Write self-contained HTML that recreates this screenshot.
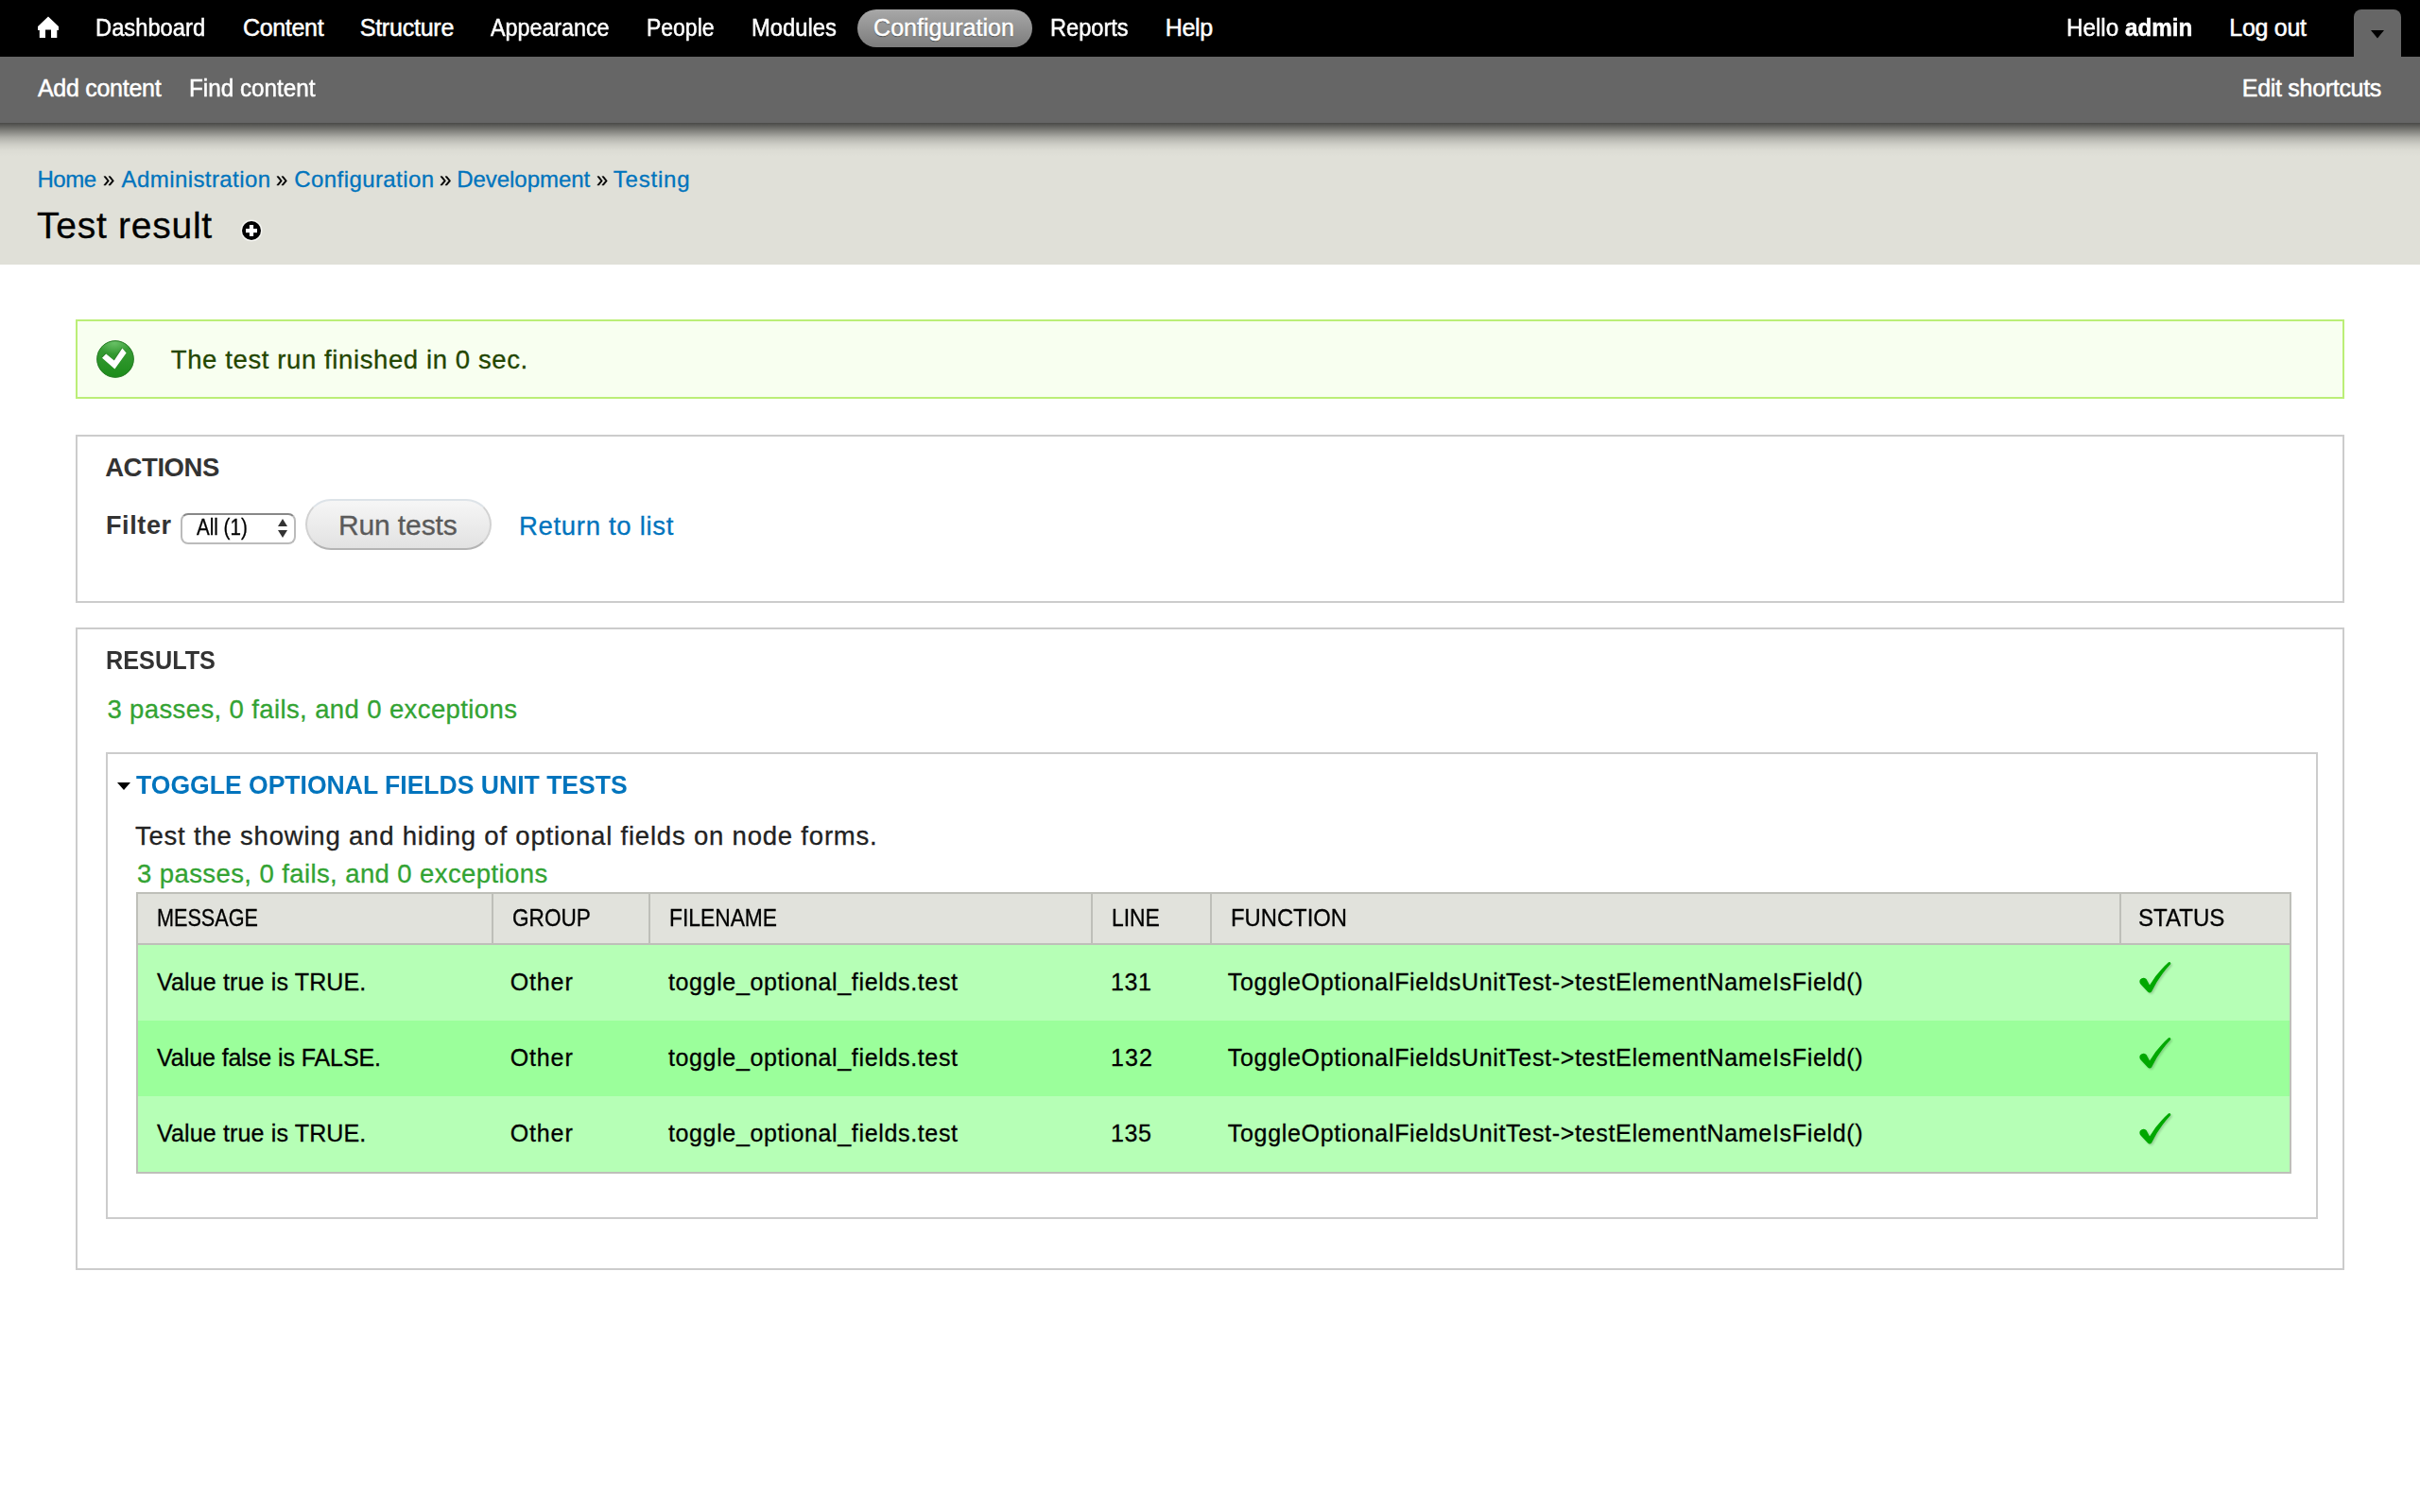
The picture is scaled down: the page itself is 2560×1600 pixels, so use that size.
<!DOCTYPE html>
<html><head><meta charset="utf-8"><title>Test result | Drupal</title>
<style>
html,body{margin:0;padding:0;}
body{width:2560px;height:1600px;position:relative;overflow:hidden;background:#fff;font-family:"Liberation Sans",sans-serif;color:#000;}
.a{position:absolute;}
.t{position:absolute;white-space:nowrap;line-height:1;}
#tb{left:0;top:0;width:2560px;height:60px;background:#000;}
#sc{left:0;top:60px;width:2560px;height:70px;background:#666;}
#hd{left:0;top:130px;width:2560px;height:150px;background:#e0e0d8;}
#shadow{left:0;top:130px;width:2560px;height:36px;background:linear-gradient(to bottom,rgba(0,0,0,.67) 0%,rgba(0,0,0,.38) 27.8%,rgba(0,0,0,.21) 44%,rgba(0,0,0,.085) 63%,rgba(0,0,0,.018) 80%,rgba(0,0,0,0) 100%);}
#pill{left:907px;top:10px;width:185px;height:40px;border-radius:20px;background:linear-gradient(#a8a8a8,#7c7c7c);}
#tab{left:2490px;top:10px;width:50px;height:50px;border-radius:8px 8px 0 0;background:#666;}
#msg{left:80px;top:338px;width:2396px;height:80px;border:2px solid #bbee77;background:#f8fff0;}
.fs{border:2px solid #ccc;}
#tbl{left:144px;top:944px;width:2276px;height:294px;border:2px solid #bebfb9;}
</style></head><body>
<div id="tb" class="a"></div>
<div id="sc" class="a"></div>
<div id="hd" class="a"></div>
<div id="shadow" class="a"></div>
<svg class="a" style="left:0;top:0" width="80" height="60" viewBox="0 0 80 60"><path fill="#fff" d="M51 17.5 L62 28 L62 32 L60.3 32 L60.3 40 L54 40 L54 31.5 L48 31.5 L48 40 L41.8 40 L41.8 32 L40 32 L40 28 Z"/></svg>
<div id="pill" class="a"></div>
<div id="tab" class="a"></div>
<svg class="a" style="left:2500px;top:25px" width="30" height="20" viewBox="0 0 30 20"><path d="M8 7 L22 7 L15 15.6 Z" fill="#000"/></svg>
<svg class="a" style="left:252px;top:230px" width="28" height="28" viewBox="0 0 28 28"><circle cx="14" cy="14" r="11.5" fill="#f4f4f0"/><circle cx="14" cy="14" r="10" fill="#000"/><rect x="8" y="12" width="12" height="4.2" fill="#fff"/><rect x="11.9" y="8" width="4.2" height="12" fill="#fff"/></svg>
<div id="msg" class="a"></div>
<svg class="a" style="left:98px;top:356px" width="48" height="48" viewBox="0 0 48 48"><defs><linearGradient id="gg" x1="0" y1="0" x2="0" y2="1"><stop offset="0" stop-color="#3fa03c"/><stop offset="1" stop-color="#1c8c1a"/></linearGradient><radialGradient id="hl" cx=".5" cy=".2" r=".5"><stop offset="0" stop-color="#6cc46a" stop-opacity=".9"/><stop offset="1" stop-color="#6cc46a" stop-opacity="0"/></radialGradient></defs><circle cx="24" cy="24" r="19.6" fill="url(#gg)"/><clipPath id="cc"><circle cx="24" cy="24" r="19.3"/></clipPath><ellipse cx="23" cy="14" rx="17" ry="12" fill="url(#hl)" clip-path="url(#cc)"/><circle cx="24" cy="24" r="19.3" fill="none" stroke="#2b7d29" stroke-width="1"/><path d="M10 22.8 L14.2 18.6 L22.8 25.5 L31.4 12.4 L35.6 17.6 L23.4 34.5 Z" fill="#2a6a28" opacity=".45" transform="translate(-0.6,-1)"/><path d="M10 22.8 L14.2 18.6 L22.8 25.5 L31.4 12.4 L35.6 17.6 L23.4 34.5 Z" fill="#fff"/></svg>
<div class="a fs" style="left:80px;top:460px;width:2396px;height:174px"></div>
<div class="a" style="left:191px;top:543px;width:118px;height:29px;border:2px solid #bbb;border-top-color:#888;border-radius:8px;background:#fff"></div>
<svg class="a" style="left:290px;top:546px" width="18" height="26" viewBox="0 0 18 26"><path d="M4 11 L9 3 L14 11 Z M4 15 L14 15 L9 23 Z" fill="#333"/></svg>
<div class="a" style="left:323px;top:528px;width:193px;height:50px;border:2px solid #d2d2d2;border-top-color:#dde3e8;border-bottom-color:#b4b4b4;border-radius:28px;background:linear-gradient(#f6f6f6,#e2e2e2)"></div>
<div class="a fs" style="left:80px;top:664px;width:2396px;height:676px"></div>
<div class="a fs" style="left:112px;top:796px;width:2336px;height:490px"></div>
<svg class="a" style="left:120px;top:824px" width="22" height="16" viewBox="0 0 22 16"><path d="M4 4 L18 4 L11 12 Z" fill="#000"/></svg>
<div id="tbl" class="a"></div>
<div class="a" style="left:146px;top:946px;width:2276px;height:52px;background:#e1e2dc;border-bottom:2px solid #bebfb9"></div>
<div class="a" style="left:520px;top:946px;width:2px;height:52px;background:#bebfb9"></div>
<div class="a" style="left:686px;top:946px;width:2px;height:52px;background:#bebfb9"></div>
<div class="a" style="left:1154px;top:946px;width:2px;height:52px;background:#bebfb9"></div>
<div class="a" style="left:1280px;top:946px;width:2px;height:52px;background:#bebfb9"></div>
<div class="a" style="left:2242px;top:946px;width:2px;height:52px;background:#bebfb9"></div>
<div class="a" style="left:146px;top:1000px;width:2276px;height:80px;background:#b6ffb6"></div>
<div class="a" style="left:146px;top:1080px;width:2276px;height:80px;background:#9bff9b"></div>
<div class="a" style="left:146px;top:1160px;width:2276px;height:80px;background:#b6ffb6"></div>
<svg class="a" style="left:2255px;top:1010px" width="50" height="50" viewBox="0 0 50 50"><path d="M9 26.5 Q12 23.5 15.5 26 L19 32.5 Q27 19 39 8.3 Q41.5 7.5 41.3 10 Q29 23 21 39.5 Q19 41.5 17 39.5 L9.5 31.5 Q7.5 29 9 26.5 Z" fill="#000" opacity=".18" transform="translate(1.5,1.5)" filter="url(#blr)"/><path d="M9 26.5 Q12 23.5 15.5 26 L19 32.5 Q27 19 39 8.3 Q41.5 7.5 41.3 10 Q29 23 21 39.5 Q19 41.5 17 39.5 L9.5 31.5 Q7.5 29 9 26.5 Z" fill="#00a800"/></svg>
<svg class="a" style="left:2255px;top:1090px" width="50" height="50" viewBox="0 0 50 50"><path d="M9 26.5 Q12 23.5 15.5 26 L19 32.5 Q27 19 39 8.3 Q41.5 7.5 41.3 10 Q29 23 21 39.5 Q19 41.5 17 39.5 L9.5 31.5 Q7.5 29 9 26.5 Z" fill="#000" opacity=".18" transform="translate(1.5,1.5)" filter="url(#blr)"/><path d="M9 26.5 Q12 23.5 15.5 26 L19 32.5 Q27 19 39 8.3 Q41.5 7.5 41.3 10 Q29 23 21 39.5 Q19 41.5 17 39.5 L9.5 31.5 Q7.5 29 9 26.5 Z" fill="#00a800"/></svg>
<svg class="a" style="left:2255px;top:1170px" width="50" height="50" viewBox="0 0 50 50"><path d="M9 26.5 Q12 23.5 15.5 26 L19 32.5 Q27 19 39 8.3 Q41.5 7.5 41.3 10 Q29 23 21 39.5 Q19 41.5 17 39.5 L9.5 31.5 Q7.5 29 9 26.5 Z" fill="#000" opacity=".18" transform="translate(1.5,1.5)" filter="url(#blr)"/><path d="M9 26.5 Q12 23.5 15.5 26 L19 32.5 Q27 19 39 8.3 Q41.5 7.5 41.3 10 Q29 23 21 39.5 Q19 41.5 17 39.5 L9.5 31.5 Q7.5 29 9 26.5 Z" fill="#00a800"/></svg>
<svg width="0" height="0" style="position:absolute"><defs><filter id="blr" x="-20%" y="-20%" width="140%" height="140%"><feGaussianBlur stdDeviation="1"/></filter></defs></svg>
<div class="t" style="left:101.4px;top:16.94px;font-size:25px;color:#fff;transform:scaleX(0.9496);transform-origin:0 0;-webkit-text-stroke:0.5px #fff;">Dashboard</div>
<div class="t" style="left:256.9px;top:16.94px;font-size:25px;color:#fff;letter-spacing:-0.3px;-webkit-text-stroke:0.5px #fff;">Content</div>
<div class="t" style="left:380.7px;top:16.94px;font-size:25px;color:#fff;letter-spacing:-0.225px;-webkit-text-stroke:0.5px #fff;">Structure</div>
<div class="t" style="left:519.4px;top:16.94px;font-size:25px;color:#fff;transform:scaleX(0.9313);transform-origin:0 0;-webkit-text-stroke:0.5px #fff;">Appearance</div>
<div class="t" style="left:683.86px;top:16.94px;font-size:25px;color:#fff;transform:scaleX(0.9187);transform-origin:0 0;-webkit-text-stroke:0.5px #fff;">People</div>
<div class="t" style="left:794.5px;top:16.94px;font-size:25px;color:#fff;transform:scaleX(0.9522);transform-origin:0 0;-webkit-text-stroke:0.5px #fff;">Modules</div>
<div class="t" style="left:924.1px;top:16.94px;font-size:25px;color:#fff;text-shadow:0 1px 1px #444;-webkit-text-stroke:0.5px #fff;">Configuration</div>
<div class="t" style="left:1110.51px;top:16.94px;font-size:25px;color:#fff;transform:scaleX(0.9435);transform-origin:0 0;-webkit-text-stroke:0.5px #fff;">Reports</div>
<div class="t" style="left:1232.7px;top:16.94px;font-size:25px;color:#fff;letter-spacing:-0.3px;-webkit-text-stroke:0.5px #fff;">Help</div>
<div class="t" style="left:2186.06px;top:16.94px;font-size:25px;color:#fff;transform:scaleX(0.9687);transform-origin:0 0;-webkit-text-stroke:0.5px #fff;">Hello <b>admin</b></div>
<div class="t" style="left:2358.3px;top:16.94px;font-size:25px;color:#fff;letter-spacing:-0.283px;-webkit-text-stroke:0.5px #fff;">Log out</div>
<div class="t" style="left:39.9px;top:80.94px;font-size:25px;color:#fff;letter-spacing:-0.27px;-webkit-text-stroke:0.5px #fff;">Add content</div>
<div class="t" style="left:199.66px;top:80.94px;font-size:25px;color:#fff;transform:scaleX(0.9699);transform-origin:0 0;-webkit-text-stroke:0.5px #fff;">Find content</div>
<div class="t" style="left:2371.8px;top:80.94px;font-size:25px;color:#fff;letter-spacing:-0.3px;-webkit-text-stroke:0.5px #fff;">Edit shortcuts</div>
<div class="t" style="left:39.5px;top:177.68px;font-size:24px;color:#0074bd;letter-spacing:-0.467px;-webkit-text-stroke-width:0.3px;">Home</div>
<div class="t" style="left:108.88px;top:177.68px;font-size:24px;color:#000;transform:scaleX(0.9182);transform-origin:0 0;-webkit-text-stroke-width:0.3px;">&raquo;</div>
<div class="t" style="left:128.6px;top:177.68px;font-size:24px;color:#0074bd;letter-spacing:0.415px;-webkit-text-stroke-width:0.3px;">Administration</div>
<div class="t" style="left:292.38px;top:177.68px;font-size:24px;color:#000;transform:scaleX(0.9182);transform-origin:0 0;-webkit-text-stroke-width:0.3px;">&raquo;</div>
<div class="t" style="left:311.3px;top:177.68px;font-size:24px;color:#0074bd;letter-spacing:0.417px;-webkit-text-stroke-width:0.3px;">Configuration</div>
<div class="t" style="left:464.76px;top:177.68px;font-size:24px;color:#000;transform:scaleX(0.9364);transform-origin:0 0;-webkit-text-stroke-width:0.3px;">&raquo;</div>
<div class="t" style="left:483.2px;top:177.68px;font-size:24px;color:#0074bd;letter-spacing:-0.04px;-webkit-text-stroke-width:0.3px;">Development</div>
<div class="t" style="left:630.89px;top:177.68px;font-size:24px;color:#000;transform:scaleX(0.9091);transform-origin:0 0;-webkit-text-stroke-width:0.3px;">&raquo;</div>
<div class="t" style="left:648.8px;top:177.68px;font-size:24px;color:#0074bd;letter-spacing:0.783px;-webkit-text-stroke-width:0.3px;">Testing</div>
<div class="t" style="left:39.0px;top:219.19px;font-size:39px;color:#000;letter-spacing:0.74px;-webkit-text-stroke-width:0.3px;">Test result</div>
<div class="t" style="left:180.8px;top:366.52px;font-size:27.5px;color:#234600;letter-spacing:0.607px;-webkit-text-stroke-width:0.3px;">The test run finished in 0 sec.</div>
<div class="t" style="left:111.2px;top:480.62px;font-size:27.5px;color:#333;font-weight:700;letter-spacing:-0.433px;">ACTIONS</div>
<div class="t" style="left:112.0px;top:542.84px;font-size:27px;color:#333;font-weight:700;letter-spacing:0.6px;">Filter</div>
<div class="t" style="left:208.2px;top:546.53px;font-size:23px;color:#000;transform:scaleX(0.8949);transform-origin:0 0;-webkit-text-stroke-width:0.3px;">All (1)</div>
<div class="t" style="left:358.0px;top:540.9px;font-size:30px;color:#5a5a5a;letter-spacing:-0.125px;-webkit-text-stroke-width:0.3px;">Run tests</div>
<div class="t" style="left:549.0px;top:542.62px;font-size:27.5px;color:#0074bd;letter-spacing:0.692px;-webkit-text-stroke-width:0.3px;">Return to list</div>
<div class="t" style="left:112.06px;top:684.82px;font-size:27.5px;color:#333;font-weight:700;transform:scaleX(0.9179);transform-origin:0 0;">RESULTS</div>
<div class="t" style="left:113.4px;top:736.52px;font-size:27.5px;color:#33a333;letter-spacing:0.385px;-webkit-text-stroke-width:0.3px;">3 passes, 0 fails, and 0 exceptions</div>
<div class="t" style="left:144.0px;top:816.62px;font-size:27.5px;color:#0074bd;font-weight:700;transform:scaleX(0.9654);transform-origin:0 0;">TOGGLE OPTIONAL FIELDS UNIT TESTS</div>
<div class="t" style="left:142.9px;top:870.52px;font-size:27.5px;color:#222;letter-spacing:0.8px;-webkit-text-stroke-width:0.3px;">Test the showing and hiding of optional fields on node forms.</div>
<div class="t" style="left:145.0px;top:910.72px;font-size:27.5px;color:#33a333;letter-spacing:0.406px;-webkit-text-stroke-width:0.3px;">3 passes, 0 fails, and 0 exceptions</div>
<div class="t" style="left:165.87px;top:958.64px;font-size:25px;color:#000;transform:scaleX(0.8645);transform-origin:0 0;-webkit-text-stroke-width:0.3px;">MESSAGE</div>
<div class="t" style="left:542.1px;top:958.64px;font-size:25px;color:#000;transform:scaleX(0.9034);transform-origin:0 0;-webkit-text-stroke-width:0.3px;">GROUP</div>
<div class="t" style="left:707.98px;top:958.64px;font-size:25px;color:#000;transform:scaleX(0.9123);transform-origin:0 0;-webkit-text-stroke-width:0.3px;">FILENAME</div>
<div class="t" style="left:1175.97px;top:958.64px;font-size:25px;color:#000;transform:scaleX(0.9151);transform-origin:0 0;-webkit-text-stroke-width:0.3px;">LINE</div>
<div class="t" style="left:1301.7px;top:958.64px;font-size:25px;color:#000;transform:scaleX(0.952);transform-origin:0 0;-webkit-text-stroke-width:0.3px;">FUNCTION</div>
<div class="t" style="left:2262.48px;top:958.64px;font-size:25px;color:#000;transform:scaleX(0.962);transform-origin:0 0;-webkit-text-stroke-width:0.3px;">STATUS</div>
<div class="t" style="left:166.1px;top:1026.64px;font-size:25px;color:#000;letter-spacing:0.144px;-webkit-text-stroke-width:0.3px;">Value true is TRUE.</div>
<div class="t" style="left:539.7px;top:1026.64px;font-size:25px;color:#000;letter-spacing:0.875px;-webkit-text-stroke-width:0.3px;">Other</div>
<div class="t" style="left:706.9px;top:1026.64px;font-size:25px;color:#000;letter-spacing:0.654px;-webkit-text-stroke-width:0.3px;">toggle_optional_fields.test</div>
<div class="t" style="left:1174.9px;top:1026.64px;font-size:25px;color:#000;letter-spacing:0.65px;-webkit-text-stroke-width:0.3px;">131</div>
<div class="t" style="left:1298.8px;top:1026.64px;font-size:25px;color:#000;letter-spacing:0.683px;-webkit-text-stroke-width:0.3px;">ToggleOptionalFieldsUnitTest-&gt;testElementNameIsField()</div>
<div class="t" style="left:166.1px;top:1106.64px;font-size:25px;color:#000;letter-spacing:-0.08px;-webkit-text-stroke-width:0.3px;">Value false is FALSE.</div>
<div class="t" style="left:539.7px;top:1106.64px;font-size:25px;color:#000;letter-spacing:0.875px;-webkit-text-stroke-width:0.3px;">Other</div>
<div class="t" style="left:706.9px;top:1106.64px;font-size:25px;color:#000;letter-spacing:0.654px;-webkit-text-stroke-width:0.3px;">toggle_optional_fields.test</div>
<div class="t" style="left:1174.9px;top:1106.64px;font-size:25px;color:#000;letter-spacing:1.15px;-webkit-text-stroke-width:0.3px;">132</div>
<div class="t" style="left:1298.8px;top:1106.64px;font-size:25px;color:#000;letter-spacing:0.683px;-webkit-text-stroke-width:0.3px;">ToggleOptionalFieldsUnitTest-&gt;testElementNameIsField()</div>
<div class="t" style="left:166.1px;top:1186.64px;font-size:25px;color:#000;letter-spacing:0.144px;-webkit-text-stroke-width:0.3px;">Value true is TRUE.</div>
<div class="t" style="left:539.7px;top:1186.64px;font-size:25px;color:#000;letter-spacing:0.875px;-webkit-text-stroke-width:0.3px;">Other</div>
<div class="t" style="left:706.9px;top:1186.64px;font-size:25px;color:#000;letter-spacing:0.654px;-webkit-text-stroke-width:0.3px;">toggle_optional_fields.test</div>
<div class="t" style="left:1174.9px;top:1186.64px;font-size:25px;color:#000;letter-spacing:0.65px;-webkit-text-stroke-width:0.3px;">135</div>
<div class="t" style="left:1298.8px;top:1186.64px;font-size:25px;color:#000;letter-spacing:0.683px;-webkit-text-stroke-width:0.3px;">ToggleOptionalFieldsUnitTest-&gt;testElementNameIsField()</div>
</body></html>
